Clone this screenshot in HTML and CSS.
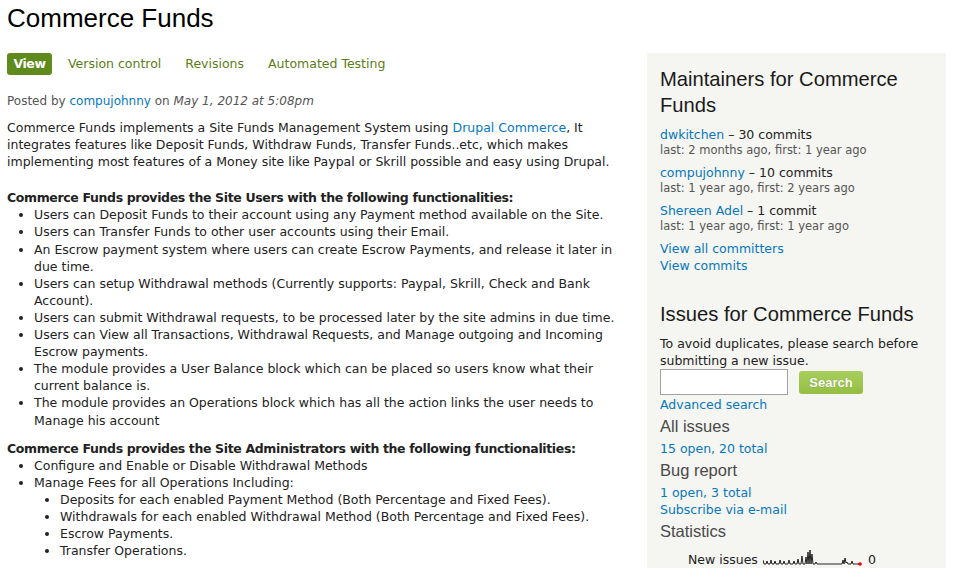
FILE: index.html
```html
<!DOCTYPE html>
<html>
<head>
<meta charset="utf-8">
<title>Commerce Funds</title>
<link rel="stylesheet" href="styles.css">
</head>
<body>
<div class="page">
  <h1 class="title">Commerce Funds</h1>
  <div class="columns">
    <main class="main">
      <ul class="tabs">
        <li><a class="tab active" href="#">View</a></li>
        <li><a class="tab" href="#">Version control</a></li>
        <li><a class="tab" href="#">Revisions</a></li>
        <li><a class="tab" href="#">Automated Testing</a></li>
      </ul>
      <div class="submitted">Posted by <a href="#">compujohnny</a> on <em>May 1, 2012 at 5:08pm</em></div>
      <div class="content">
        <p class="intro">Commerce Funds implements a Site Funds Management System using <a href="#">Drupal Commerce</a>, It integrates features like Deposit Funds, Withdraw Funds, Transfer Funds..etc, which makes implementing most features of a Money site like Paypal or Skrill possible and easy using Drupal.</p>
        <p class="fh">Commerce Funds provides the Site Users with the following functionalities:</p>
        <ul class="list">
          <li>Users can Deposit Funds to their account using any Payment method available on the Site.</li>
          <li>Users can Transfer Funds to other user accounts using their Email.</li>
          <li>An Escrow payment system where users can create Escrow Payments, and release it later in due time.</li>
          <li>Users can setup Withdrawal methods (Currently supports: Paypal, Skrill, Check and Bank Account).</li>
          <li>Users can submit Withdrawal requests, to be processed later by the site admins in due time.</li>
          <li>Users can View all Transactions, Withdrawal Requests, and Manage outgoing and Incoming Escrow payments.</li>
          <li>The module provides a User Balance block which can be placed so users know what their current balance is.</li>
          <li>The module provides an Operations block which has all the action links the user needs to Manage his account</li>
        </ul>
        <p class="fh">Commerce Funds provides the Site Administrators with the following functionalities:</p>
        <ul class="list">
          <li>Configure and Enable or Disable Withdrawal Methods</li>
          <li>Manage Fees for all Operations Including:
            <ul class="list sub">
              <li>Deposits for each enabled Payment Method (Both Percentage and Fixed Fees).</li>
              <li>Withdrawals for each enabled Withdrawal Method (Both Percentage and Fixed Fees).</li>
              <li>Escrow Payments.</li>
              <li>Transfer Operations.</li>
            </ul>
          </li>
        </ul>
      </div>
    </main>
    <aside class="sidebar">
      <section class="block maintainers">
        <h2 class="block-title">Maintainers for Commerce Funds</h2>
        <div class="maintainer">
          <div><a href="#">dwkitchen</a> – 30 commits</div>
          <div class="meta">last: 2 months ago, first: 1 year ago</div>
        </div>
        <div class="maintainer">
          <div><a href="#">compujohnny</a> – 10 commits</div>
          <div class="meta">last: 1 year ago, first: 2 years ago</div>
        </div>
        <div class="maintainer">
          <div><a href="#">Shereen Adel</a> – 1 commit</div>
          <div class="meta">last: 1 year ago, first: 1 year ago</div>
        </div>
        <div class="links">
          <a href="#">View all committers</a>
          <a href="#">View commits</a>
        </div>
      </section>
      <section class="block issues">
        <h2 class="block-title">Issues for Commerce Funds</h2>
        <p class="note">To avoid duplicates, please search before submitting a new issue.</p>
        <form class="search">
          <input class="search-input" type="text">
          <button class="search-btn" type="button">Search</button>
        </form>
        <a class="stack adv" href="#">Advanced search</a>
        <h3 class="sub-title">All issues</h3>
        <a class="stack" href="#">15 open, 20 total</a>
        <h3 class="sub-title">Bug report</h3>
        <a class="stack" href="#">1 open, 3 total</a>
        <a class="stack" href="#">Subscribe via e-mail</a>
        <h3 class="sub-title">Statistics</h3>
        <div class="stat">
          <span>New issues</span>
          <svg class="spark" width="100" height="18" viewBox="0 0 100 18">
            <polyline fill="none" stroke="#222" stroke-width="1" points="0,12 1,16 3,16 4,13 5,16 7,16 8,12 9,16 11,16 12,13 13,16 16,16 17,12 18,16 20,16 21,13 22,16 25,16 26,12 27,16 30,16 31,13 32,16 34,16 35,11 36,16 38,16 39,8 40,16 42,16 43,9 44,16 45,4 46,16 47,2 48,16 49,6 50,16 52,16 53,14 54,16 79,16 80,12 81,16 82,10 83,15 84,14 85,16 88,16 89,13 90,16 96,16"/>
            <circle cx="97" cy="16" r="1.8" fill="#e00"/>
          </svg>
          <span>0</span>
        </div>
      </section>
    </aside>
  </div>
</div>
</body>
</html>
```
FILE: styles.css
```css
* { box-sizing: border-box; }
html, body { margin: 0; padding: 0; background: #fff; }
body {
  font-family: "DejaVu Sans", Verdana, sans-serif;
  font-size: 12.5px;
  line-height: 17.1px;
  color: #222;
}
a { color: #0678be; text-decoration: none; }
.page { padding: 0 8px 0 7px; }
.title {
  margin: 0;
  padding-top: 3px;
  font-family: "Liberation Sans", Arial, sans-serif;
  font-weight: normal;
  font-size: 26px;
  line-height: 30px;
  color: #000;
}
.columns {
  display: flex;
  gap: 14px;
  margin-top: 20px;
  align-items: flex-start;
}
.main { width: 626px; flex: none; }
.sidebar { width: 299px; flex: none; background: #f5f5f1; padding: 13px 13px 20px; min-height: 560px; }

.tabs { list-style: none; margin: 0; padding: 0; display: flex; gap: 8px; }
.tab {
  display: block;
  height: 22px;
  line-height: 22px;
  padding: 0 8px;
  color: #5a7d18;
  border-radius: 3px;
}
.tab.active {
  width: 45px; padding: 0; text-align: center;
  background: #5f8b1d; color: #fff; font-weight: bold; letter-spacing: -0.4px;
}

.submitted { margin-top: 18px; font-size: 12px; line-height: 17px; color: #555; }
.submitted em { font-style: italic; }

.content { margin-top: 9px; }
.intro { margin: 0 0 19px; }
.fh { margin: 0; font-weight: bold; letter-spacing: -0.36px; }
.list { margin: 0 0 11px; padding-left: 27px; list-style-type: disc; }
.list li { margin: 0; }
.list.sub { margin: 0; padding-left: 26px; list-style-type: disc; }

.block-title {
  margin: 0;
  font-family: "Liberation Sans", Arial, sans-serif;
  font-weight: normal;
  font-size: 20.2px;
  line-height: 26px;
  color: #1a1a1a;
}
.maintainers .block-title { margin-bottom: 8px; }
.maintainer { margin-bottom: 6px; line-height: 17px; }
.meta { font-size: 11.5px; line-height: 15px; color: #555; }
.links { margin-top: 1px; display: flex; flex-direction: column; line-height: 17px; }

.issues { margin-top: 27px; }
.note { margin: 8px 0 0; line-height: 17px; }
.search { display: flex; align-items: center; gap: 11px; margin: 0; }
.search-input {
  width: 128px; height: 26px; margin: 0;
  border: 1px solid #a3a3a3; background: #fff; padding: 2px 4px;
}
.search-btn {
  width: 64px; height: 23px; margin: 0; padding: 0;
  border: 0; border-radius: 3px;
  background: linear-gradient(#a8cf5c, #95be46);
  color: #fff;
  font-family: "Liberation Sans", Arial, sans-serif;
  font-weight: bold;
  font-size: 13px;
  text-shadow: 0 0 1px rgba(80,110,20,0.6);
}
.stack { display: block; line-height: 17px; }
.adv { margin-top: 1px; }
.sub-title {
  margin: 2px 0 3px;
  font-family: "Liberation Sans", Arial, sans-serif;
  font-weight: normal;
  font-size: 16.5px;
  line-height: 22px;
  color: #4a4a4a;
}
.stat {
  display: flex; align-items: center; gap: 5px;
  margin-top: 9px; padding-left: 28px;
  line-height: 17px;
  color: #222;
}
.spark { display: block; margin-top: -6px; }
```
